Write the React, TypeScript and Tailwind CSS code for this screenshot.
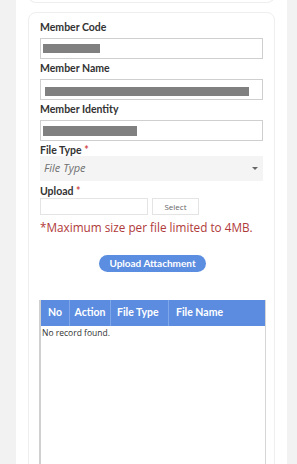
const Label = ({ text, req }: { text: string; req?: boolean }) => (
  <div className="font-['Lato',sans-serif] text-[10.5px] font-bold leading-[14px] text-[#333]">
    {text}
    {req && <span className="text-[#d04848]"> *</span>}
  </div>
)

const App = () => {
  return (
    <div className="flex min-h-[464px] bg-[#f2f2f2] font-['Open_Sans',sans-serif]">
      <div className="ml-4 w-[271px] h-[464px] overflow-hidden bg-white px-3">
        {/* previous card bottom */}
        <div className="-mt-3 h-[15px] rounded-b-lg border border-t-0 border-[#eeeeee]" />

        {/* main card */}
        <div className="mt-[9px] h-[460px] rounded-lg border border-[#eeeeee] pl-[11px] pr-[12px] pt-[7px]">
          <div className="w-[223px]">
            <Label text="Member Code" />
            <div className="mt-[4px] h-[21px] border border-[#cfcfcf] pl-[2px] pt-[5px]">
              <div className="h-[9px] w-[57px] bg-[#808080]" />
            </div>

            <div className="mt-[2px]"><Label text="Member Name" /></div>
            <div className="mt-[4px] h-[21px] border border-[#cfcfcf] pl-[4px] pt-[7px]">
              <div className="h-[9px] w-[204px] bg-[#808080]" />
            </div>

            <div className="mt-[2px]"><Label text="Member Identity" /></div>
            <div className="mt-[4px] h-[21px] border border-[#cfcfcf] pl-[2px] pt-[5px]">
              <div className="h-[10px] w-[94px] bg-[#808080]" />
            </div>

            <div className="mt-[2px]"><Label text="File Type" req /></div>
            <div className="-mt-[1px] flex h-[25px] items-center justify-between bg-[#f4f4f4] pl-[4px] pr-[5px]">
              <span className="text-[11px] italic text-[#707070]">File Type</span>
              <svg width="6" height="4" viewBox="0 0 6 4"><path d="M0 0h6L3 3z" fill="#666" /></svg>
            </div>

            <div className="mt-[3px]"><Label text="Upload" req /></div>
            <div className="flex gap-[4px]">
              <div className="h-[17px] w-[108px] border border-[#e4e4e4]" />
              <div className="flex h-[17px] w-[47px] items-center justify-center border border-[#e4e4e4] text-[8px] text-[#666]">
                Select
              </div>
            </div>
            <div className="mt-[5px] text-[11.75px] leading-[14px] text-[#b03a3a]">
              *Maximum size per file limited to 4MB.
            </div>

            <div className="mt-[21px] flex justify-center pl-[2px]">
              <div className="rounded-full bg-[#5b8de0] px-[10px] font-['Lato',sans-serif] text-[10px] font-bold leading-[17px] text-white">
                Upload Attachment
              </div>
            </div>
          </div>

          <div className="mt-[28px] -ml-[1px] h-[200px] w-[227px] border-x border-[#d6d6d6] border-l-2 border-l-[#d0d0d0]">
            <div className="flex h-[26px] items-center bg-[#5b8ce0] font-['Lato',sans-serif] text-[10.5px] font-bold text-white">
              <div className="flex h-full w-[29px] items-center justify-center border-r border-[#7fa6e8]">No</div>
              <div className="flex h-full w-[41px] items-center justify-center border-r border-[#7fa6e8]">Action</div>
              <div className="flex h-full w-[58px] items-center pl-[6px] border-r border-[#7fa6e8]">File Type</div>
              <div className="flex h-full flex-1 items-center pl-[7px]">File Name</div>
            </div>
            <div className="pl-[1px] pt-[1px] text-[8.5px] leading-[12px] text-[#333]">No record found.</div>
          </div>
        </div>
      </div>
    </div>
  )
}

export default App
